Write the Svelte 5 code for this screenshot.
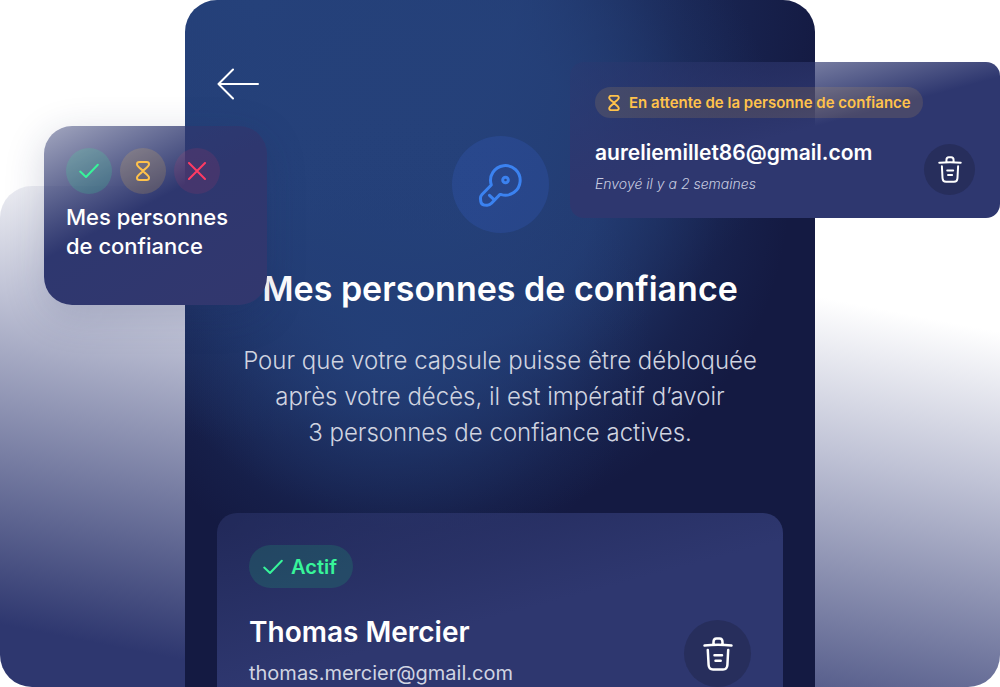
<script>
  const trusted = { name: 'Thomas Mercier', email: 'thomas.mercier@gmail.com' };
  const pending = { email: 'aureliemillet86@gmail.com', sent: 'Envoyé il y a 2 semaines' };
</script>

{#snippet check()}
  <svg class="check" viewBox="0 0 20 16" aria-hidden="true"><path d="M1.2 8.6 7 14 18.8 1.8" /></svg>
{/snippet}

{#snippet hourglass()}
  <svg class="hourglass" viewBox="0 0 14 20" aria-hidden="true">
    <path d="M3.4 1h7.2C12 1 13 2 13 3.3C13 6 7 9 7 10S13 14 13 16.7C13 18 12 19 10.6 19H3.4C2 19 1 18 1 16.7C1 14 7 11 7 10S1 6 1 3.3C1 2 2 1 3.4 1Z" />
  </svg>
{/snippet}

{#snippet trash()}
  <svg class="trash" viewBox="0 0 30 34" aria-hidden="true">
    <path d="M1.5 8.5Q15 7 28.5 8.5M10.5 7.5V5Q10.5 1.5 13.5 1.5H16.5Q19.5 1.5 19.5 5V7.5" />
    <path d="M4.8 13 5.6 28Q5.9 32.5 10 32.5H20Q24.1 32.5 24.4 28L25.2 13M11.5 18.2H19M12.5 23.8H17.7" />
  </svg>
{/snippet}

<main class="stage">
  <div class="backdrop"></div>

  <section class="phone">
    <button class="back" aria-label="Retour">
      <svg viewBox="0 0 42 32" aria-hidden="true"><path d="M16 1.5 1.5 16 16 30.5M1.5 16H41" /></svg>
    </button>
    <div class="key">
      <svg viewBox="0 0 44 44" aria-hidden="true">
        <circle cx="27.500" cy="17" r="2.8" />
        <path d="M13.300 22A14.800 14.800 0 1 1 23.300 31.600H21.800L13.500 40.300Q11.500 42.400 8.800 42.200L6.200 42Q3.200 41.500 2.800 38.500L2.500 36Q2.200 33.500 4 31.500ZM11.500 32.300 16.300 36.800" />
      </svg>
    </div>
    <h1>Mes personnes de confiance</h1>
    <p class="intro">
      Pour que votre capsule puisse être débloquée<br />après votre décès, il est impératif d’avoir<br />3 personnes de confiance actives.
    </p>
    <article class="person">
      <span class="pill active">{@render check()}Actif</span>
      <div class="row">
        <div class="info">
          <h2>{trusted.name}</h2>
          <p>{trusted.email}</p>
        </div>
        <button class="delete" aria-label="Supprimer {trusted.name}">{@render trash()}</button>
      </div>
    </article>
  </section>

  <aside class="summary">
    <div class="states">
      <span class="state green">{@render check()}</span>
      <span class="state amber">{@render hourglass()}</span>
      <span class="state red">
        <svg class="cross" viewBox="0 0 18 18" aria-hidden="true"><path d="M1 1 17 17M17 1 1 17" /></svg>
      </span>
    </div>
    <p>Mes personnes<br />de confiance</p>
  </aside>

  <article class="pending">
    <span class="pill waiting">{@render hourglass()}En attente de la personne de confiance</span>
    <div class="row">
      <div class="info">
        <h2>{pending.email}</h2>
        <p>{pending.sent}</p>
      </div>
      <button class="delete" aria-label="Supprimer {pending.email}">{@render trash()}</button>
    </div>
  </article>
</main>

<style>
  :global(body) {
    margin: 0;
    background: #fff;
  }
  .stage {
    position: relative;
    display: flex;
    justify-content: center;
    min-height: 100vh;
    overflow: hidden;
    font-family: Inter, 'Liberation Sans', sans-serif;
    color: #fff;
  }
  h1, h2, p {
    margin: 0;
  }
  svg {
    display: block;
    flex: none;
    fill: none;
    stroke: currentColor;
    stroke-width: 2;
    stroke-linecap: round;
    stroke-linejoin: round;
  }
  button {
    display: grid;
    place-items: center;
    padding: 0;
    border: 0;
    color: inherit;
    background: none;
    cursor: pointer;
  }
  .backdrop {
    position: absolute;
    inset: 186px 0 0;
    border-radius: 32px;
    background: linear-gradient(191deg, #fff 21%, #c0c3d6 43%, #2e376f 91%);
  }
  .phone {
    position: relative;
    box-sizing: border-box;
    display: flex;
    flex-direction: column;
    width: 63%;
    padding: 68px 32px 0;
    border-radius: 32px 32px 0 0;
    background:
      radial-gradient(ellipse 42% 34% at 32% 50%, #233f78 0%, #233f7880 45%, #233f7820 80%, #233f7800 100%),
      radial-gradient(ellipse 56% 50% at 40% 27%, #25417a 0%, #25417acc 45%, #25417a33 80%, #25417a00 100%),
      radial-gradient(ellipse 90% 64% at 12% 0%, #25417a 0%, #25417aee 45%, #25417a55 75%, #25417a00 100%),
      #141a42;
  }
  .back {
    width: 40px;
    height: 32px;
  }
  .back svg {
    width: 42px;
    height: 32px;
  }
  .key {
    display: grid;
    place-items: center;
    align-self: center;
    width: 97px;
    height: 97px;
    margin-top: 36px;
    border-radius: 50%;
    color: #3b82f0;
    background: #3562c83d;
  }
  .key svg {
    width: 44px;
    height: 44px;
    stroke-width: 3;
  }
  h1 {
    margin-top: 34px;
    font-size: 34px;
    font-weight: 600;
    line-height: 44px;
    text-align: center;
    white-space: nowrap;
  }
  .intro {
    margin-top: 32px;
    font-size: 24px;
    font-weight: 300;
    line-height: 36px;
    text-align: center;
    white-space: nowrap;
    color: #d0d4e0;
  }
  .person {
    flex: 1;
    margin-top: 62px;
    padding: 32px 32px 0;
    border-radius: 20px 20px 0 0;
    background: linear-gradient(165deg, #2e376f80 0%, #2e376f 55%);
  }
  .pill {
    display: inline-flex;
    align-items: center;
    border-radius: 24px;
    white-space: nowrap;
  }
  .active {
    gap: 8px;
    height: 43px;
    padding: 0 16px 0 14px;
    font-size: 20px;
    font-weight: 600;
    color: #37f59a;
    background: #1f8f7045;
  }
  .row {
    display: flex;
    align-items: flex-end;
    justify-content: space-between;
  }
  .person .row {
    margin-top: 24px;
  }
  .person h2 {
    font-size: 28px;
    font-weight: 600;
    line-height: 40px;
  }
  .person p {
    margin-top: 8px;
    font-size: 20px;
    line-height: 27px;
    color: #d0d4e2;
  }
  .delete {
    width: 67px;
    height: 67px;
    border-radius: 50%;
    background: #272e5c;
  }
  .trash {
    width: 30px;
    height: 34px;
    stroke-width: 2.5;
  }
  .check {
    width: 20px;
    height: 16px;
  }
  .hourglass {
    width: 14px;
    height: 20px;
  }
  .cross {
    width: 18px;
    height: 18px;
  }
  .summary {
    position: absolute;
    top: 126px;
    left: 44px;
    padding: 22px 39px 44px 22px;
    border-radius: 28px;
    background: linear-gradient(152deg, #2e376f70 0%, #2e376f 45%, #32376e 100%);
    box-shadow: 0 10px 40px #20265a33;
  }
  .states {
    display: flex;
    gap: 8px;
  }
  .state {
    display: grid;
    place-items: center;
    width: 46px;
    height: 46px;
    border-radius: 50%;
  }
  .green {
    color: #37f59a;
    background: #37f59a2b;
  }
  .amber {
    color: #ffc24b;
    background: #ffc24b2b;
  }
  .red {
    color: #ff3b63;
    background: #ff3b631c;
  }
  .summary p {
    margin-top: 9px;
    font-size: 22px;
    font-weight: 500;
    line-height: 29px;
    white-space: nowrap;
  }
  .pending {
    position: absolute;
    top: 62px;
    right: 0;
    box-sizing: border-box;
    width: 430px;
    padding: 25px 25px 23px;
    border-radius: 14px;
    background: linear-gradient(165deg, #2e376f50 0%, #2e376f 48%);
  }
  .waiting {
    gap: 8px;
    height: 31px;
    padding: 0 12px;
    font-size: 15px;
    font-weight: 600;
    color: #ffc24b;
    background: #ffc24b20;
  }
  .waiting .hourglass {
    height: 16px;
    stroke-width: 2.4;
  }
  .pending .row {
    margin-top: 20px;
  }
  .pending h2 {
    font-size: 21px;
    font-weight: 600;
    line-height: 29px;
  }
  .pending p {
    margin-top: 6px;
    font-size: 14px;
    font-style: italic;
    font-weight: 300;
    line-height: 22px;
    color: #c8cce0;
  }
  .pending .delete {
    width: 51px;
    height: 51px;
  }
  .pending .trash {
    width: 24px;
    height: 27px;
  }
</style>
